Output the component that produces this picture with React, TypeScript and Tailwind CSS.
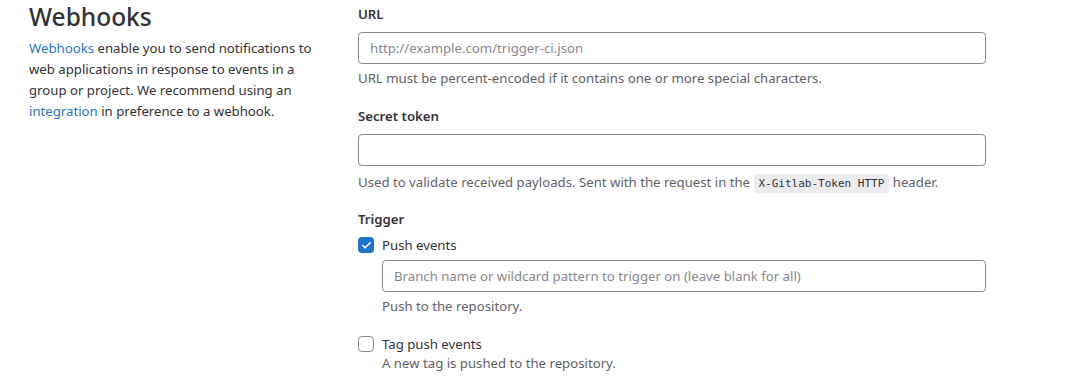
import { Check } from "lucide-react";

const font = { fontFamily: '"Noto Sans", "Open Sans", sans-serif' };

function Field({
  label,
  placeholder,
  helpClass,
  className,
  children,
}: {
  label: string;
  placeholder?: string;
  helpClass: string;
  className: string;
  children: React.ReactNode;
}) {
  return (
    <div className={className}>
      <label className="block text-[13.2px] font-semibold leading-[20px] text-[#333238] mb-[8px]">
        {label}
      </label>
      <input
        className="block w-full h-[32px] rounded-[4px] border border-[#89888d] px-[11px] text-[13.2px] text-[#333238] placeholder:text-[#89888d] outline-none"
        placeholder={placeholder}
      />
      <p className={`${helpClass} text-[13.2px] leading-[20px] text-[#626168]`}>{children}</p>
    </div>
  );
}

export default function App() {
  return (
    <div className="w-[1065px] h-[391px] bg-white overflow-hidden" style={font}>
      <div className="flex pl-[29px] pt-[4px]">
        {/* Colonne de gauche */}
        <div className="w-[298px] shrink-0">
          <h2 className="text-[24.5px] font-medium leading-[26px] text-[#333238]">Webhooks</h2>
          <p className="mt-[8px] text-[13.2px] leading-[21px] text-[#333238]">
            <a className="text-[#1f75cb]">Webhooks</a> enable you to send notifications to web
            applications in response to events in a group or project. We recommend using an{" "}
            <a className="text-[#1f75cb]">integration</a> in preference to a webhook.
          </p>
        </div>

        {/* Formulaire */}
        <div className="ml-[31px] w-[628px]">
          <Field
            label="URL"
            placeholder="http://example.com/trigger-ci.json"
            helpClass="mt-[4px]"
            className="mb-[18px]"
          >
            URL must be percent-encoded if it contains one or more special characters.
          </Field>
          <Field label="Secret token" helpClass="mt-[6px]" className="mb-[15px]">
            Used to validate received payloads. Sent with the request in the{" "}
            <code
              className="rounded-[4px] bg-[#ececef] px-[5px] py-[3px] text-[11px] text-[#333238]"
              style={{ fontFamily: '"DejaVu Sans Mono", monospace' }}
            >
              X-Gitlab-Token HTTP
            </code>{" "}
            header.
          </Field>

          <div className="text-[13.2px] font-semibold leading-[20px] text-[#333238]">Trigger</div>
          <div className="mt-[6px] flex items-center gap-[8px] h-[20px]">
            <span className="flex h-[16px] w-[16px] items-center justify-center rounded-[4px] bg-[#1f75cb]">
              <Check size={11} strokeWidth={3.5} className="text-white" />
            </span>
            <span className="text-[13.2px] leading-[20px] text-[#333238]">Push events</span>
          </div>
          <div className="ml-[24px] mt-[5px]">
            <input
              className="block w-full h-[32px] rounded-[4px] border border-[#89888d] px-[11px] text-[13.2px] placeholder:text-[#89888d] outline-none"
              placeholder="Branch name or wildcard pattern to trigger on (leave blank for all)"
            />
            <p className="mt-[4px] text-[13.2px] leading-[20px] text-[#626168]">Push to the repository.</p>
          </div>

          <div className="mt-[18px] flex items-center gap-[8px] h-[20px]">
            <span className="h-[16px] w-[16px] rounded-[4px] border border-[#89888d] bg-white" />
            <span className="text-[13.2px] leading-[20px] text-[#333238]">Tag push events</span>
          </div>
          <p className="ml-[24px] -mt-[1px] text-[13.2px] leading-[20px] text-[#626168]">
            A new tag is pushed to the repository.
          </p>
        </div>
      </div>
    </div>
  );
}
